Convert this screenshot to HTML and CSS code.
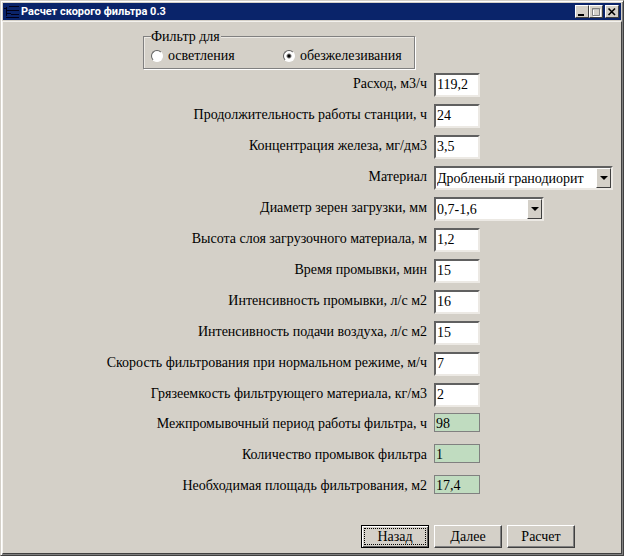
FILE: index.html
```html
<!DOCTYPE html>
<html lang="ru">
<head>
<meta charset="utf-8">
<meta name="viewport" content="width=device-width, initial-scale=1">
<title>Расчет скорого фильтра 0.3</title>
<link rel="stylesheet" href="styles.css">
</head>
<body>
<div class="window">
  <header class="titlebar">
    <svg class="app-icon" width="16" height="16" viewBox="0 0 16 16" aria-hidden="true">
      <path d="M2.500 3v9M0 4.500h2M5 2.500h10M2 6.500h13M3 9.500h4M7 10.500h8M2 13.500h13" fill="none" stroke="#000018"/>
    </svg>
    <h1 class="title">Расчет скорого фильтра 0.3</h1>
    <button class="caption-button" type="button" aria-label="Свернуть">
      <svg width="10" height="10" viewBox="0 0 10 10"><path d="M1 7h6v2H1z" fill="#000"/></svg>
    </button>
    <button class="caption-button" type="button" aria-label="Развернуть" disabled>
      <svg width="10" height="10" viewBox="0 0 10 10"><path d="M2 2.500h7.500v7H2.500v-7" fill="none" stroke="#fff"/><path d="M1.500 1.500h7v7h-7zM1 2h8" fill="none" stroke="#808080"/></svg>
    </button>
    <button class="caption-button close" type="button" aria-label="Закрыть">
      <svg width="10" height="10" viewBox="0 0 10 10"><path d="M1.500 1.500l6.500 6.500M8 1.500L1.500 8" fill="none" stroke="#000" stroke-width="1.600"/></svg>
    </button>
  </header>
  <form class="client">
    <fieldset class="group">
      <legend>Фильтр для</legend>
      <div class="options">
        <label class="option"><input type="radio" name="mode">осветления</label>
        <label class="option"><input type="radio" name="mode" checked>обезжелезивания</label>
      </div>
    </fieldset>
    <div class="fields">
      <label for="flow">Расход, м3/ч</label>
      <input id="flow" type="text" value="119,2">
      <label for="hours">Продолжительность работы станции, ч</label>
      <input id="hours" type="text" value="24">
      <label for="iron">Концентрация железа, мг/дм3</label>
      <input id="iron" type="text" value="3,5">
      <label for="material">Материал</label>
      <div class="combo wide">
        <select id="material"><option>Дробленый гранодиорит</option></select>
        <span class="arrow"></span>
      </div>
      <label for="grain">Диаметр зерен загрузки, мм</label>
      <div class="combo">
        <select id="grain"><option>0,7-1,6</option></select>
        <span class="arrow"></span>
      </div>
      <label for="height">Высота слоя загрузочного материала, м</label>
      <input id="height" type="text" value="1,2">
      <label for="wash-time">Время промывки, мин</label>
      <input id="wash-time" type="text" value="15">
      <label for="wash-rate">Интенсивность промывки, л/с м2</label>
      <input id="wash-rate" type="text" value="16">
      <label for="air-rate">Интенсивность подачи воздуха, л/с м2</label>
      <input id="air-rate" type="text" value="15">
      <label for="speed">Скорость фильтрования при нормальном режиме, м/ч</label>
      <input id="speed" type="text" value="7">
      <label for="capacity">Грязеемкость фильтрующего материала, кг/м3</label>
      <input id="capacity" type="text" value="2">
      <label for="period">Межпромывочный период работы фильтра, ч</label>
      <input id="period" class="result" type="text" value="98" readonly>
      <label for="count">Количество промывок фильтра</label>
      <input id="count" class="result" type="text" value="1" readonly>
      <label for="area">Необходимая площадь фильтрования, м2</label>
      <input id="area" class="result" type="text" value="17,4" readonly>
    </div>
    <div class="actions">
      <button class="push default" type="button"><span>Назад</span></button>
      <button class="push" type="button"><span>Далее</span></button>
      <button class="push" type="button"><span>Расчет</span></button>
    </div>
  </form>
</div>
</body>
</html>
```
FILE: styles.css
```css
* {
  box-sizing: border-box;
}

body {
  margin: 0;
  background: #d4d0c8;
  color: #000;
  font: 14px/20px "Liberation Serif", "Times New Roman", serif;
}

input,
select,
button {
  margin: 0;
  font: inherit;
  color: inherit;
  border-radius: 0;
}

.window {
  display: flex;
  flex-direction: column;
  min-height: 100vh;
  padding: 1px;
  border: 1px solid;
  border-color: #d4d0c8 #404040 #404040 #d4d0c8;
  box-shadow: inset 1px 1px #fff, inset -1px -1px #808080;
}

.titlebar {
  display: flex;
  align-items: center;
  height: 17px;
  margin: 1px;
  padding-right: 2px;
  background: #0a246a;
}

.app-icon {
  flex: none;
  margin: 0 1px;
}

.title {
  flex: 1;
  margin: 0;
  color: #fff;
  font: bold 11px/16px Roboto, Tahoma, sans-serif;
  white-space: nowrap;
}

.caption-button {
  display: grid;
  place-items: center;
  width: 14px;
  height: 13px;
  padding: 0;
  background: #d4d0c8;
  border: 1px solid;
  border-color: #fff #404040 #404040 #fff;
}

.caption-button.close {
  margin-left: 2px;
}

.client {
  flex: 1;
  display: flex;
  flex-direction: column;
  padding-top: 5px;
  border: 1px solid;
  border-color: #f4f2ee #404040 #404040 #f4f2ee;
}

.group {
  width: 272px;
  margin: 0 0 1px 140px;
  padding: 0 6px 1px 7px;
  border: 1px solid #808080;
  box-shadow: 1px 1px #fff, inset 1px 1px #ece9e4;
}

.group legend {
  padding: 2px 1px 0 0;
  background: #d4d0c8;
  line-height: 16px;
}

.options {
  display: grid;
  grid-template-columns: 132px auto;
}

.option {
  display: flex;
  align-items: center;
  gap: 5px;
  line-height: 22px;
}

.option input {
  appearance: none;
  width: 12px;
  height: 12px;
  border: 1px solid;
  border-color: #606060 #fff #fff #606060;
  border-radius: 50%;
  background: #fff;
}

.option input:checked {
  background: radial-gradient(circle, #000 1px, #fff 3px);
}

.fields {
  display: grid;
  grid-template-columns: 424px auto;
  grid-template-rows: repeat(10, 31px) 30px;
  grid-auto-rows: 31px;
  column-gap: 7px;
  align-items: start;
  justify-items: start;
  padding-top: 3px;
}

.fields label {
  justify-self: end;
  line-height: 22px;
  white-space: nowrap;
}

.fields input,
.combo {
  width: 46px;
  height: 24px;
  padding: 0 0 0 1px;
  background: #fff;
  border: 2px solid;
  border-color: #606060 #ece9e4 #ece9e4 #606060;
}

.fields input.result {
  height: 19px;
  padding-top: 2px;
  background: #c0dcc0;
  border: 1px solid #808080;
}

.combo {
  position: relative;
  width: 110px;
  padding: 0;
}

.combo.wide {
  width: 179px;
}

.combo select {
  appearance: none;
  display: block;
  width: 100%;
  height: 20px;
  padding: 1px 14px 0 1px;
  border: 0;
  background: transparent;
}

.arrow {
  position: absolute;
  top: 0;
  right: 0;
  bottom: 0;
  display: grid;
  place-items: center;
  width: 15px;
  background: #d4d0c8;
  border: 1px solid;
  border-color: #fff #404040 #404040 #fff;
  pointer-events: none;
}

.arrow::before {
  content: "";
  border: 4px solid transparent;
  border-top-color: #000;
  border-bottom: 0;
}

.actions {
  display: flex;
  justify-content: flex-end;
  gap: 5px;
  margin-top: auto;
  padding: 0 46px 5px 0;
}

.push {
  width: 68px;
  height: 23px;
  padding: 2px;
  line-height: 17px;
  background: #d4d0c8;
  border: 1px solid;
  border-color: #fff #404040 #404040 #fff;
  box-shadow: inset -1px -1px #808080;
}

.push span {
  display: block;
}

.push.default {
  border-color: #000;
  box-shadow: inset 1px 1px #fff, inset -1px -1px #606060;
}

.push.default span {
  outline: 1px dotted #000;
  outline-offset: -1px;
}
```
